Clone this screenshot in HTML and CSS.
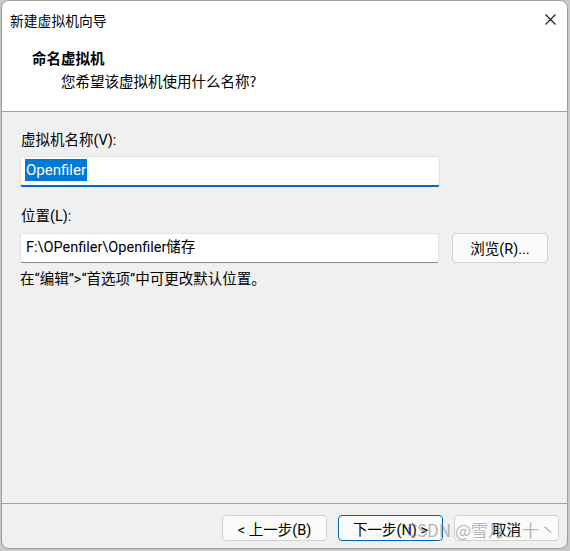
FILE: index.html
```html
<!DOCTYPE html>
<html lang="zh-CN">
<head>
<meta charset="utf-8">
<title>新建虚拟机向导</title>
<link rel="stylesheet" href="styles.css">
</head>
<body>
<div class="window">
  <div class="titlebar">
    <span class="title">新建虚拟机向导</span>
    <svg class="close" width="11" height="11" viewBox="0 0 11 11"><path d="M0.5 0.5 L10.5 10.5 M10.5 0.5 L0.5 10.5" stroke="#1a1a1a" stroke-width="1.1" fill="none"/></svg>
  </div>
  <div class="header">
    <div class="h-title">命名虚拟机</div>
    <div class="h-sub">您希望该虚拟机使用什么名称?</div>
  </div>
  <div class="body">
    <div class="label first">虚拟机名称(V):</div>
    <div class="input focused"><span class="sel">Openfiler</span></div>
    <div class="label second">位置(L):</div>
    <div class="row">
      <div class="input path">F:\OPenfiler\Openfiler储存</div>
      <div class="btn browse">浏览(R)...</div>
    </div>
    <div class="hint">在“编辑”&gt;“首选项”中可更改默认位置。</div>
  </div>
  <div class="footer">
    <div class="btn nav">&lt; 上一步(B)</div>
    <div class="btn nav default">下一步(N) &gt;</div>
    <div class="btn nav">取消</div>
  </div>
  <div class="watermark">CSDN @雪月三十丶</div>
</div>
</body>
</html>
```

FILE: styles.css
```css
html, body {
  margin: 0;
  padding: 0;
  background: #c8c8c8;
}
body {
  padding-left: 1px;
  width: 570px;
  height: 551px;
  box-sizing: border-box;
  overflow: hidden;
  font-family: Roboto, "Noto Sans CJK SC", sans-serif;
  font-size: 14.5px;
  color: #000;
}
.window {
  position: relative;
  width: 567px;
  height: 549px;
  box-sizing: border-box;
  border: 1px solid #9c9c9c;
  border-radius: 8px;
  background: #f0f0f0;
  overflow: hidden;
  display: flex;
  flex-direction: column;
}
.titlebar {
  height: 36px;
  background: #fff;
  display: flex;
  align-items: center;
  justify-content: space-between;
  padding: 0 11px 0 8px;
}
.title {
  font-size: 13.8px;
  font-family: "Noto Sans CJK SC", sans-serif;
  line-height: 20px;
  margin-top: 1px;
}
.close {
  display: block;
}
.header {
  background: #fff;
  padding: 11px 0 20px 30px;
  border-bottom: 1px solid #a0a0a0;
}
.h-title {
  font-family: "Noto Sans CJK SC", sans-serif;
  font-weight: 700;
  font-size: 14.5px;
  line-height: 20px;
  height: 23px;
}
.h-sub {
  font-family: "Noto Sans CJK SC", sans-serif;
  padding-left: 29px;
  line-height: 20px;
}
.body {
  flex: 1;
  padding: 19px 0 0 18px;
}
.label {
  line-height: 20px;
  padding-left: 1px;
}
.second {
  margin-top: 20px;
}
.input {
  box-sizing: border-box;
  background: #fff;
  border: 1px solid #e3e3e3;
  border-bottom: 1px solid #8a8a8a;
  border-radius: 3px;
  display: flex;
  align-items: center;
  padding-left: 4px;
}
.focused {
  margin-top: 5px;
  width: 420px;
  height: 31px;
  border-bottom: 2px solid #0067c0;
  padding-bottom: 2px;
}
.sel {
  background: #0078d7;
  color: #fff;
  line-height: 22px;
  padding: 0 1px;
  font-size: 15px;
}
.row {
  margin-top: 6px;
  display: flex;
  align-items: flex-start;
  gap: 13px;
}
.path {
  width: 419px;
  height: 30px;
  font-size: 14.5px;
  padding-left: 5px;
  padding-bottom: 5px;
}
.btn {
  box-sizing: border-box;
  background: #fbfbfb;
  border: 1px solid #d0d0d0;
  border-radius: 4px;
  display: flex;
  align-items: center;
  justify-content: center;
}
.browse {
  width: 96px;
  height: 30px;
  padding-bottom: 1px;
}
.hint {
  margin-top: 7px;
  line-height: 20px;
}
.footer {
  border-top: 1px solid #a0a0a0;
  height: 45px;
  box-sizing: border-box;
  padding: 11px 8px 0 0;
  display: flex;
  justify-content: flex-end;
  gap: 11px;
}
.nav {
  width: 105px;
  height: 26px;
}
.default {
  border: 1px solid #0067c0;
}
.watermark {
  position: absolute;
  right: 11px;
  bottom: 6px;
  font-family: "Noto Sans CJK SC", sans-serif;
  font-size: 17px;
  color: rgba(120, 120, 120, 0.55);
  pointer-events: none;
}
```
